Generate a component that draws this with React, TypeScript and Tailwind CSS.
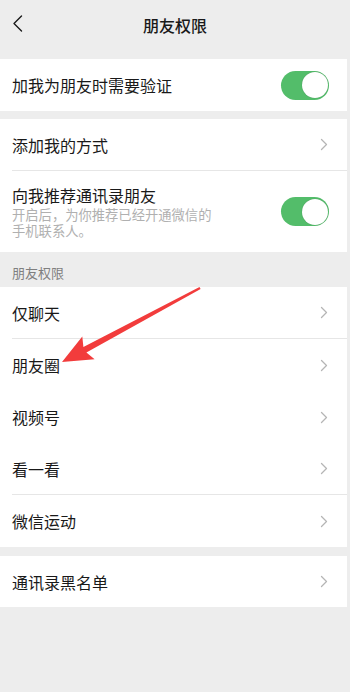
import React from "react";

const font = { fontFamily: '"Noto Sans CJK SC", "Noto Sans", sans-serif' };

function Chevron() {
  return (
    <svg width="8" height="13" viewBox="0 0 8 13" className="shrink-0">
      <path d="M1.5 1.5 L6.5 6.5 L1.5 11.5" fill="none" stroke="#b5b5b5" strokeWidth="1.3" strokeLinecap="round" strokeLinejoin="round" />
    </svg>
  );
}

function Toggle() {
  return (
    <div className="flex h-[29px] w-[48px] shrink-0 items-center justify-end rounded-full bg-[#53bd6a] pr-[1.5px]">
      <div className="h-[26px] w-[26px] rounded-full bg-white shadow-[0_0_1px_rgba(0,0,0,0.3)]" />
    </div>
  );
}

function Row({ label, last, height = "h-[52px]" }: { label: string; last?: boolean; height?: string }) {
  return (
    <div className="pl-3">
      <div className={`flex ${height} items-center justify-between pr-[19px] ${last ? "" : "border-b border-[#e6e6e6]"}`}>
        <span className="text-[16px] text-[#191919]">{label}</span>
        <Chevron />
      </div>
    </div>
  );
}

export default function App() {
  return (
    <div className="relative min-h-[692px] w-[350px] overflow-hidden bg-[#ededed]" style={font}>
      {/* header */}
      <div className="relative flex h-[50px] items-center justify-center">
        <svg width="12" height="18" viewBox="0 0 12 18" className="absolute left-[12px] top-[15px]">
          <path d="M9.5 1 L2 8.5 L9.5 16" fill="none" stroke="#1a1a1a" strokeWidth="1.4" strokeLinecap="round" strokeLinejoin="round" />
        </svg>
        <span className="text-[16px] font-medium text-[#191919]">朋友权限</span>
      </div>

      {/* card 1 */}
      <div className="mr-[3px] mt-[9px] bg-white">
        <div className="flex h-[52px] items-center justify-between pl-3 pr-[18px]">
          <span className="text-[16px] text-[#191919]">加我为朋友时需要验证</span>
          <Toggle />
        </div>
      </div>

      {/* card 2 */}
      <div className="mr-[3px] mt-2 bg-white">
        <Row label="添加我的方式" height="h-[52px]" />
        <div className="flex h-[81px] items-center justify-between pl-3 pr-[18px]">
          <div className="flex flex-col">
            <span className="text-[16px] leading-[22px] text-[#191919]">向我推荐通讯录朋友</span>
            <span className="mt-[1px] block text-[13.3px] leading-[16px] text-[#b0b0b0]">开启后，为你推荐已经开通微信的</span>
            <span className="block text-[13.3px] leading-[16px] text-[#b0b0b0]">手机联系人。</span>
          </div>
          <Toggle />
        </div>
      </div>

      {/* section label */}
      <div className="flex h-[35px] items-start pl-3 pt-[12px]">
        <span className="text-[13px] leading-[18px] text-[#7f7f7f]">朋友权限</span>
      </div>

      {/* card 3 */}
      <div className="mr-[3px] bg-white">
        <Row label="仅聊天" />
        <Row label="朋友圈" last />
        <Row label="视频号" last />
        <Row label="看一看" />
        <Row label="微信运动" last />
      </div>

      {/* card 4 */}
      <div className="mr-[3px] mt-[9px] bg-white">
        <Row label="通讯录黑名单" last height="h-[51px]" />
      </div>

      {/* annotation arrow */}
      <svg className="pointer-events-none absolute left-0 top-0" width="350" height="692" viewBox="0 0 350 692">
        <polygon
          points="62,362 94.6,359.3 86.4,352.5 200.6,288.9 199.5,287.1 83.4,346.9 82.3,336.4"
          fill="#f23c3c"
        />
      </svg>
    </div>
  );
}
